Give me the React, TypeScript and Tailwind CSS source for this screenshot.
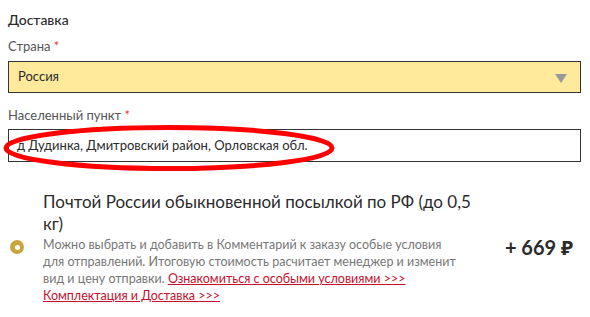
import React from "react";

const Required = () => <span className="text-[#e53935]"> *</span>;

export default function App() {
  return (
    <div className="w-[590px] h-[317px] bg-white overflow-hidden font-['Lato','Noto_Sans',sans-serif] text-[#333]">
      <div className="px-2 pt-[11px]">
        <div className="text-[14px] leading-[18px] font-medium text-[#2b2b2b]">Доставка</div>

        <div className="mt-[9px] text-[13px] leading-[17px] text-[#555]">
          Страна<Required />
        </div>
        <div className="relative mt-[6px] h-[32px] w-[573px] border border-[#333] bg-[#ffe99b] flex items-center pl-[9px] text-[13px] text-[#2b2b2b]">
          Россия
          <span className="absolute right-[13px] top-[12px] w-0 h-0 border-l-[6px] border-r-[6px] border-t-[9px] border-l-transparent border-r-transparent border-t-[#999]" />
        </div>

        <div className="mt-[14px] text-[13px] leading-[17px] text-[#555]">
          Населенный пункт<Required />
        </div>
        <div className="relative mt-[5px] h-[33px] w-[573px] border border-[#333] bg-white flex items-center pl-[8px] text-[13px] text-[#2b2b2b]">
          д Дудинка, Дмитровский район, Орловская обл.
          <svg className="absolute left-[-7px] top-[-6px]" width="334" height="48" viewBox="0 0 334 48">
            <ellipse cx="167" cy="24" rx="163" ry="20.5" fill="none" stroke="#ff0000" strokeWidth="5" />
          </svg>
        </div>

        <div className="mt-[29px] flex items-start">
          <div className="w-[35px] pl-[2px] pt-[49px]">
            <span className="w-[14px] h-[14px] rounded-full bg-[#c9a53f] flex items-center justify-center">
              <span className="w-[5px] h-[5px] rounded-full bg-white" />
            </span>
          </div>
          <div className="w-[440px]">
            <div className="text-[17px] leading-[22px] text-[#2b2b2b]">
              Почтой России обыкновенной посылкой по РФ (до 0,5 кг)
            </div>
            <div className="mt-[1px] w-[418px] text-[12.5px] leading-[17px] text-[#777]">
              Можно выбрать и добавить в Комментарий к заказу особые условия для отправлений. Итоговую стоимость
              расчитает менеджер и изменит вид и цену отправки.{" "}
              <a className="text-[#c8102e] underline">Ознакомиться с особыми условиями &gt;&gt;&gt;</a>{" "}
              <a className="text-[#c8102e] underline">Комплектация и Доставка &gt;&gt;&gt;</a>
            </div>
          </div>
          <div className="flex-1 pt-[44px] flex justify-end pr-[9px] text-[20px] leading-[24px] font-bold text-[#2b2b2b]">
            + 669 ₽
          </div>
        </div>
      </div>
    </div>
  );
}
